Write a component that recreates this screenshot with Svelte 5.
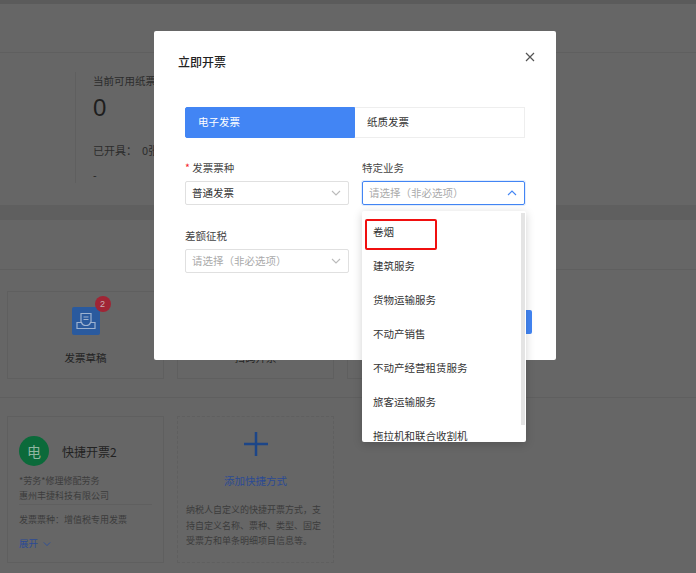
<script>
  const options = ["卷烟", "建筑服务", "货物运输服务", "不动产销售", "不动产经营租赁服务", "旅客运输服务", "拖拉机和联合收割机"];
  const chevron = "M1 1l4 4 4-4";
</script>

<!-- page behind the dialog, already painted in its dimmed colours -->
<div class="page">
  <div class="topstrip"></div>
  <section class="stats">
    <div class="stats-head"></div>
    <div class="stats-body">
      <div class="stat">
        <p class="stat-label">当前可用纸票</p>
        <p class="stat-num">0</p>
        <p class="stat-used">已开具：&nbsp; 0张</p>
        <p class="stat-dash">-</p>
      </div>
    </div>
  </section>
  <section class="lower">
    <div class="lower-head"></div>
    <div class="tiles">
      <div class="tile">
        <div class="tile-icon">
          <svg width="28" height="28" viewBox="0 0 28 28" fill="none" stroke="#9db2d0" stroke-width="1.2">
            <path d="M9 15V6.5h10V15M11.5 10h5M11.5 12.5h5" />
            <path d="M5 15.5h4.5c.5 2 2 3 4.5 3s4-1 4.5-3H23v6H5z" />
          </svg>
          <span class="badge">2</span>
        </div>
        <span>发票草稿</span>
      </div>
      <div class="tile"><div class="tile-blank"></div><span>扫码开票</span></div>
      <div class="tile"></div>
    </div>
    <div class="divider"></div>
    <div class="quick">
      <div class="qcard">
        <div class="qhead"><span class="avatar">电</span><span class="qtitle">快捷开票2</span></div>
        <p class="qline">*劳务*修理修配劳务</p>
        <p class="qline qcompany">惠州丰捷科技有限公司</p>
        <p class="qline qtype">发票票种：增值税专用发票</p>
        <p class="qmore">展开
          <svg width="8" height="6" viewBox="0 0 10 6" fill="none" stroke="#2f4f9a" stroke-width="1.2"><path d={chevron} /></svg>
        </p>
      </div>
      <div class="qcard qadd">
        <svg class="plus" width="24" height="24" viewBox="0 0 24 24" fill="#1d4688"><path d="M10.75 0h2.5v10.75H24v2.5H13.25V24h-2.5V13.25H0v-2.5h10.75z" /></svg>
        <p class="qadd-title">添加快捷方式</p>
        <p class="qadd-desc">纳税人自定义的快捷开票方式，支持自定义名称、票种、类型、固定受票方和单条明细项目信息等。</p>
      </div>
    </div>
  </section>
</div>

<div class="modal">
  <h2>立即开票</h2>
  <svg class="close" width="10" height="10" viewBox="0 0 10 10" stroke="#555" stroke-width="1.2"><path d="M1 1l8 8M9 1l-8 8" /></svg>

  <div class="tabs">
    <div class="tab active">电子发票</div>
    <div class="tab">纸质发票</div>
  </div>

  <div class="form">
    <div class="field">
      <span class="label"><i>*</i> 发票票种</span>
      <div class="select">
        <span>普通发票</span>
        <svg width="10" height="6" viewBox="0 0 10 6" fill="none" stroke="#bbb" stroke-width="1.1"><path d={chevron} /></svg>
      </div>
    </div>
    <div class="field">
      <span class="label">特定业务</span>
      <div class="select open">
        <span class="ph">请选择（非必选项）</span>
        <svg width="10" height="6" viewBox="0 0 10 6" fill="none" stroke="#4285f4" stroke-width="1.1"><path d="M1 5l4-4 4 4" /></svg>
      </div>
    </div>
    <div class="field">
      <span class="label">差额征税</span>
      <div class="select">
        <span class="ph">请选择（非必选项）</span>
        <svg width="10" height="6" viewBox="0 0 10 6" fill="none" stroke="#bbb" stroke-width="1.1"><path d={chevron} /></svg>
      </div>
    </div>
  </div>

  <div class="peek"></div>

  <div class="dropdown">
    <div class="mark"></div>
    <div class="thumb"></div>
    {#each options as opt}
      <div class="option">{opt}</div>
    {/each}
  </div>
</div>

<style>
  :global(body) {
    margin: 0;
    font-family: "Noto Sans CJK SC", "Liberation Sans", sans-serif;
    background: #666;
    overflow: hidden;
  }

  p {
    margin: 0;
  }

  .page {
    width: 696px;
    height: 573px;
    overflow: hidden;
    background: #666;
    color: #222;
    font-size: 10.5px;
  }

  .topstrip {
    height: 4px;
    background: #5b5b5b;
  }

  .stats {
    height: 201px;
    border-bottom: 15px solid #5f5f5f;
  }

  .stats-head {
    height: 48px;
    border-bottom: 1px solid #5f5f5f;
  }

  .stats-body {
    padding: 19px 0 0 75px;
  }

  .stat {
    height: 111px;
    box-sizing: border-box;
    padding-left: 17px;
    border-left: 1px solid #5f5f5f;
  }

  .stat-label {
    line-height: 17px;
    color: #2c2c2c;
  }

  .stat-num {
    margin-top: 1px;
    font-family: "Liberation Sans", sans-serif;
    font-size: 24px;
    line-height: 36px;
    color: #1e1e1e;
  }

  .stat-used {
    margin-top: 14px;
    font-size: 11px;
    line-height: 20px;
    color: #2c2c2c;
  }

  .stat-dash {
    margin-top: 6px;
    line-height: 18px;
  }

  .lower-head {
    height: 49px;
    border-bottom: 1px solid #5f5f5f;
  }

  .tiles {
    display: flex;
    gap: 13px;
    padding: 21px 0 0 7px;
  }

  .tile {
    position: relative;
    width: 157px;
    height: 88px;
    box-sizing: border-box;
    flex: none;
    border: 1px solid #5f5f5f;
    display: flex;
    flex-direction: column;
    align-items: center;
    padding-top: 15px;
    line-height: 18px;
  }

  .tile-icon {
    position: relative;
    width: 28px;
    height: 28px;
    margin-bottom: 14px;
    background: #2a5a9e;
    border-radius: 2px;
  }

  .tile-blank {
    height: 28px;
    margin-bottom: 14px;
  }

  .badge {
    position: absolute;
    top: -11px;
    right: -11px;
    width: 16px;
    height: 16px;
    border-radius: 50%;
    background: #a02535;
    color: #c9b0b4;
    font: 9px/16px "Liberation Sans", sans-serif;
    text-align: center;
  }

  .divider {
    margin-top: 18px;
    border-top: 1px solid #5f5f5f;
  }

  .quick {
    display: flex;
    gap: 13px;
    padding: 18px 0 0 7px;
  }

  .qcard {
    width: 157px;
    height: 147px;
    box-sizing: border-box;
    flex: none;
    border: 1px solid #5f5f5f;
    padding: 19px 11px 0;
    color: #3c3c3c;
    font-size: 9px;
  }

  .qhead {
    display: flex;
    align-items: center;
    gap: 13px;
    margin-bottom: 7px;
    color: #222;
    font-size: 12px;
  }

  .avatar {
    width: 30px;
    height: 30px;
    border-radius: 50%;
    background: #0b6a3a;
    color: #8fb5a0;
    font-size: 14px;
    line-height: 30px;
    text-align: center;
  }

  .qline {
    line-height: 15px;
  }

  .qcompany {
    padding-bottom: 1px;
    border-bottom: 1px solid #5f5f5f;
    margin-bottom: 7px;
  }

  .qtype {
    line-height: 16px;
  }

  .qmore {
    margin-top: 6px;
    color: #2b4a94;
    font-size: 9.5px;
    line-height: 18px;
  }

  .qmore svg {
    margin-left: 3px;
  }

  .qadd {
    border-style: dashed;
    text-align: center;
    padding: 15px 8px 0;
  }

  .plus {
    display: block;
    margin: 0 auto;
  }

  .qadd-title {
    margin-top: 16px;
    color: #2b4a94;
    font-size: 10.5px;
    line-height: 18px;
  }

  .qadd-desc {
    margin-top: 12px;
    text-align: left;
    line-height: 15.5px;
  }

  .modal {
    position: absolute;
    left: 154px;
    top: 31px;
    width: 402px;
    height: 329px;
    box-sizing: border-box;
    padding: 22px 31px 0;
    background: #fff;
    border-radius: 2px;
    color: #333;
    font-size: 10.5px;
  }

  h2 {
    margin: 0 0 0 -7px;
    color: #222;
    font-size: 12px;
    font-weight: 500;
    line-height: 18px;
  }

  .close {
    position: absolute;
    right: 21px;
    top: 21px;
  }

  .tabs {
    display: flex;
    margin-top: 36px;
    height: 31px;
  }

  .tab {
    width: 170px;
    box-sizing: border-box;
    padding-left: 12px;
    border: 1px solid #eee;
    border-left: 0;
    line-height: 28px;
  }

  .tab.active {
    background: #4285f4;
    border: 1px solid #4285f4;
    border-radius: 2px 0 0 2px;
    color: #fff;
  }

  .form {
    display: grid;
    grid-template-columns: 164px 163px;
    column-gap: 13px;
    row-gap: 22px;
    margin-top: 21px;
  }

  .field {
    display: flex;
    flex-direction: column;
  }

  .label {
    line-height: 17px;
    color: #444;
  }

  .label i {
    color: #f5222d;
    font-style: normal;
  }

  .select {
    display: flex;
    align-items: center;
    justify-content: space-between;
    height: 24px;
    box-sizing: border-box;
    padding: 0 7px 1px 6px;
    margin-top: 5px;
    border: 1px solid #e0e0e0;
    border-radius: 2px;
    color: #333;
  }

  .select.open {
    border-color: #4285f4;
    box-shadow: 0 0 0 1px rgba(66, 133, 244, 0.15);
  }

  .ph {
    color: #aaa;
  }

  .peek {
    position: absolute;
    left: 360px;
    top: 279px;
    width: 18px;
    height: 24px;
    background: #4285f4;
    border-radius: 2px;
  }

  .dropdown {
    position: absolute;
    left: 208px;
    top: 180px;
    width: 164px;
    height: 231px;
    overflow: hidden;
    background: #fff;
    border-radius: 2px;
    box-shadow: 0 2px 10px rgba(0, 0, 0, 0.18);
    padding-top: 4px;
    box-sizing: border-box;
  }

  .mark {
    position: absolute;
    left: 3px;
    top: 8px;
    width: 72px;
    height: 31px;
    box-sizing: border-box;
    border: 2px solid #f00f0f;
    border-radius: 2px;
  }

  .thumb {
    position: absolute;
    right: 1px;
    top: 2px;
    width: 4px;
    height: 212px;
    background: #e4e4e4;
  }

  .option {
    height: 34px;
    padding-left: 11px;
    line-height: 34px;
    color: #333;
    white-space: nowrap;
  }
</style>
